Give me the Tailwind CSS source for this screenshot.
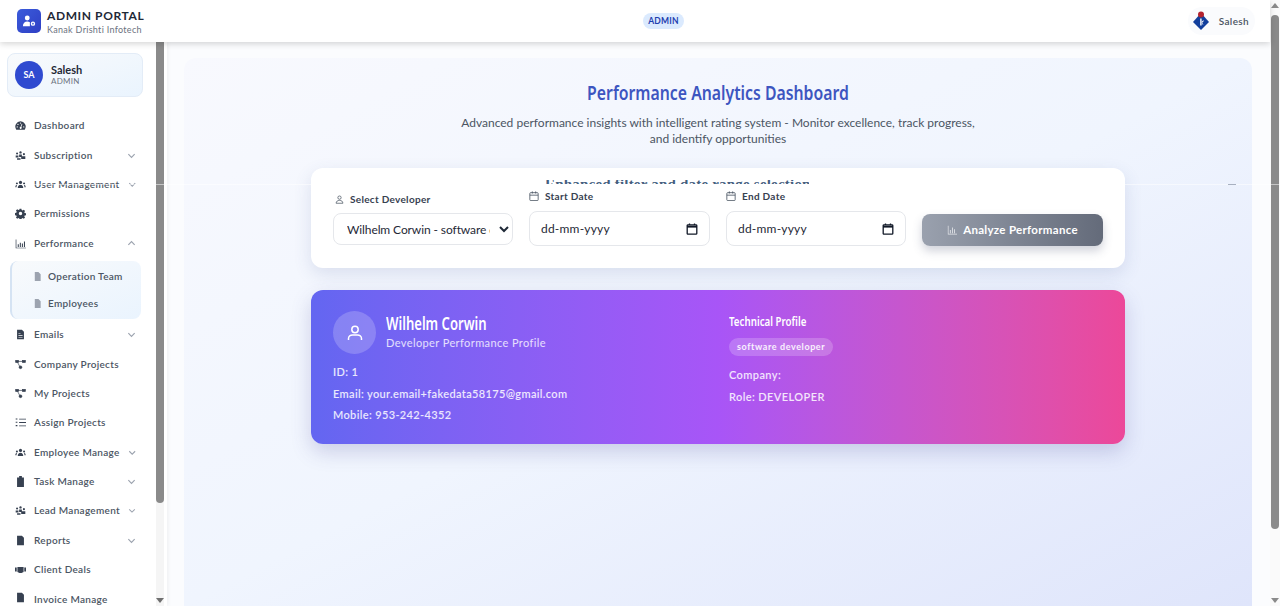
<!DOCTYPE html>
<html lang="en">
<head>
    <meta charset="UTF-8">
    <meta name="viewport" content="width=device-width, initial-scale=1.0">
    <title>Performance Analytics Dashboard</title>
    <script src="https://cdn.jsdelivr.net/npm/@tailwindcss/browser@4"></script>
</head>
<body class="h-[606px] overflow-hidden bg-white font-['Lato','Open_Sans',sans-serif] text-[#374151]">
    <div class="relative flex h-[606px]">
        <div class="flex-1 min-w-0">
            <!-- Header -->
            <header class="relative z-20 flex h-[42px] items-center justify-between bg-white pl-[17px] pr-[15px] shadow-[0_2px_6px_rgba(0,0,0,0.16)]">
                <div class="flex items-center gap-[6px]">
                    <div class="flex h-6 w-6 items-center justify-center rounded-[5px] bg-gradient-to-br from-[#3b5bdb] to-[#2f3fc4]">
                        <svg class="h-[14px] w-[14px]" viewBox="0 0 16 16" fill="#fff"><circle cx="6" cy="4.5" r="2.8"/><path d="M1 14c0-3.4 2.2-5.4 5-5.4 1.2 0 2.2.3 3 .9V14z"/><rect x="10" y="8.5" width="5" height="5" rx="2.5"/><circle cx="12.5" cy="11" r="1" fill="#3b5bdb"/></svg>
                    </div>
                    <div>
                        <div class="mt-[1px] text-[12px] leading-[15px] font-bold tracking-[0.6px] text-[#1f2937]">ADMIN PORTAL</div>
                        <div class="mt-[1px] text-[9px] leading-[11px] tracking-[0.3px] text-[#6b7280]">Kanak Drishti Infotech</div>
                    </div>
                </div>
                <div class="mr-[5px] rounded-full bg-[#dbeafe] px-[5px] py-[2px] text-[8.5px] leading-3 font-bold tracking-[0.2px] text-[#1e40af]">ADMIN</div>
                <div class="flex items-center gap-[9px] rounded-full bg-[#fafbfd] py-1 pr-[6px] pl-1">
                    <svg class="h-[20px] w-[18px]" viewBox="0 0 18 20"><path d="M9 2 17 11 9 19 1 11z" fill="#123f9c"/><circle cx="9" cy="3.5" r="3" fill="#b4232f"/><path d="M8.2 7.5h1.4v7H8.2z" fill="#fff"/><path d="M9.5 11l2-2v1.500l-1.400 1.200 1.400 1.800h-1z" fill="#fff"/></svg>
                    <span class="text-[10px] font-semibold tracking-[0.35px] text-[#4b5563]">Salesh</span>
                </div>
            </header>

            <div class="flex h-[564px]">
                <!-- Sidebar -->
                <aside class="relative w-[167px] shrink-0 overflow-hidden bg-white pr-[24px] pl-2 pt-[11px] shadow-[1px_0_4px_rgba(0,0,0,0.06)]">
                    <div class="-ml-[1px] flex h-[44px] w-[136px] items-center gap-2 rounded-lg border border-[#e3ecf7] bg-gradient-to-br from-[#f8fafc] to-[#eaf4fe] pl-[7px]">
                        <div class="flex h-[28px] w-[28px] items-center justify-center rounded-full bg-[#2f4ad0] text-[9px] font-bold text-white">SA</div>
                        <div class="-mt-[2px]">
                            <div class="text-[11px] leading-[13px] font-bold text-[#1f2937]">Salesh</div>
                            <div class="text-[8px] leading-[10px] tracking-[0.3px] text-[#6b7280]">ADMIN</div>
                        </div>
                    </div>

                    <nav class="mt-[14px] whitespace-nowrap text-[10px] font-semibold tracking-[0.3px] text-[#4b5563]">
                        <a class="flex h-[29.4px] items-center gap-[8px]"><svg class="ml-[7px] h-[11px] w-[11px] shrink-0" viewBox="0 0 16 16" fill="#374151"><path d="M8 2a7.5 7.5 0 0 0-6.500 11.300l.4.7h12.200l.4-.7A7.5 7.5 0 0 0 8 2z"/><g fill="#fff"><circle cx="8" cy="4.5" r=".9"/><circle cx="4.3" cy="6.5" r=".9"/><circle cx="3.2" cy="10" r=".9"/><circle cx="12.8" cy="10" r=".9"/><path d="M9.8 5.500l.9.4-1.500 4.300a1.500 1.500 0 1 1-1-.3z"/></g></svg>Dashboard</a>
                        <a class="flex h-[29.4px] items-center gap-[8px]"><svg class="ml-[7px] h-[11px] w-[11px] shrink-0" viewBox="0 0 16 16" fill="#374151"><circle cx="3" cy="5" r="1.5"/><circle cx="8" cy="3.5" r="1.7"/><circle cx="13" cy="6" r="1.5"/><path d="M1 8h4v3H1zM6 6.500h4V10H6zM9 9h6v4H9zM3 12h5v2H3z"/></svg>Subscription<svg class="mr-[7px] ml-auto h-[9px] w-[9px]" viewBox="0 0 10 10" fill="none" stroke="#9ca3af" stroke-width="1.3"><path d="M1.500 3.500 5 7l3.500-3.500"/></svg></a>
                        <a class="flex h-[29.4px] items-center gap-[8px]"><svg class="ml-[7px] h-[11px] w-[11px] shrink-0" viewBox="0 0 16 16" fill="#374151"><circle cx="8" cy="5" r="2.3"/><circle cx="2.8" cy="6.5" r="1.5"/><circle cx="13.2" cy="6.5" r="1.5"/><path d="M4 13c0-3 1.600-4.800 4-4.800s4 1.800 4 4.800zM0.500 12c0-2 .8-3.500 2.500-3.500-.5 1-.8 2.200-.8 3.500zM15.500 12c0-2-.8-3.500-2.500-3.500.5 1 .8 2.200.8 3.500z"/></svg>User Management<svg class="mr-[7px] ml-auto h-[9px] w-[9px]" viewBox="0 0 10 10" fill="none" stroke="#9ca3af" stroke-width="1.3"><path d="M1.500 3.500 5 7l3.500-3.500"/></svg></a>
                        <a class="flex h-[29.4px] items-center gap-[8px]"><svg class="ml-[7px] h-[11px] w-[11px] shrink-0" viewBox="0 0 16 16" fill="#374151"><path fill-rule="evenodd" d="M6.700 1h2.600l.4 2 1.400.6 1.700-1.100 1.800 1.800-1.100 1.700.6 1.400 2 .4v2.600l-2 .4-.6 1.400 1.100 1.700-1.800 1.800-1.700-1.100-1.400.6-.4 2H6.700l-.4-2-1.400-.6-1.700 1.100-1.800-1.800 1.100-1.700-.6-1.400-2-.4V7.200l2-.4.6-1.400L1.400 3.700l1.800-1.800 1.700 1.100 1.400-.6zM8 5.500a2.500 2.500 0 1 0 0 5 2.500 2.500 0 0 0 0-5z"/></svg>Permissions</a>
                        <a class="flex h-[29.4px] items-center gap-[8px]"><svg class="ml-[7px] h-[11px] w-[11px] shrink-0" viewBox="0 0 16 16" fill="#374151"><path d="M1 2h1v12h14v1H1zM4 9h1.500v4H4zM7 7h1.500v6H7zM10 8h1.500v5H10zM13 5h1.500v8H13z"/></svg>Performance<svg class="mr-[7px] ml-auto h-[9px] w-[9px]" viewBox="0 0 10 10" fill="none" stroke="#9ca3af" stroke-width="1.3"><path d="M1.500 6.500 5 3l3.500 3.500"/></svg></a>
                        <div class="mt-[3px] ml-[2px] flex h-[58px] w-[131px] flex-col rounded-lg border-l-2 border-[#d5e3f3] bg-gradient-to-br from-[#f8fafc] to-[#eaf4fe] pt-[2px]">
                            <a class="flex h-[27px] items-center gap-[6px] pl-[21px]"><svg class="h-[9px] w-[9px] shrink-0" viewBox="0 0 10 10" fill="#9ca3af"><path d="M2 0h4l2.500 2.500V10H2zM3 4.500h4.500v1H3zM3 6.500h4.500v1H3z"/></svg>Operation Team</a>
                            <a class="flex h-[27px] items-center gap-[6px] pl-[21px]"><svg class="h-[9px] w-[9px] shrink-0" viewBox="0 0 10 10" fill="#9ca3af"><path d="M2 0h4l2.500 2.500V10H2zM3 4.500h4.500v1H3zM3 6.500h4.500v1H3z"/></svg>Employees</a>
                        </div>
                        <a class="mt-[1px] flex h-[29.4px] items-center gap-[8px]"><svg class="ml-[7px] h-[11px] w-[11px] shrink-0" viewBox="0 0 16 16" fill="#374151"><path fill-rule="evenodd" d="M3 1h7l3 3v11H3zM5 6h3v1H5zM5 9h6v1H5zM5 11.500h6v1H5z"/></svg>Emails<svg class="mr-[7px] ml-auto h-[9px] w-[9px]" viewBox="0 0 10 10" fill="none" stroke="#9ca3af" stroke-width="1.3"><path d="M1.500 3.500 5 7l3.500-3.500"/></svg></a>
                        <a class="flex h-[29.4px] items-center gap-[8px]"><svg class="ml-[7px] h-[11px] w-[11px] shrink-0" viewBox="0 0 16 16" fill="none" stroke="#374151"><path d="M3 3.500h10M3 3.500 7.500 12"/><g fill="#374151"><rect x="1" y="2" width="4" height="3"/><rect x="11" y="2" width="4" height="3"/><circle cx="8" cy="12" r="2"/></g></svg>Company Projects</a>
                        <a class="flex h-[29.4px] items-center gap-[8px]"><svg class="ml-[7px] h-[11px] w-[11px] shrink-0" viewBox="0 0 16 16" fill="none" stroke="#374151"><path d="M3 3.500h10M3 3.500 7.500 12"/><g fill="#374151"><rect x="1" y="2" width="4" height="3"/><rect x="11" y="2" width="4" height="3"/><circle cx="8" cy="12" r="2"/></g></svg>My Projects</a>
                        <a class="flex h-[29.4px] items-center gap-[8px]"><svg class="ml-[7px] h-[11px] w-[11px] shrink-0" viewBox="0 0 16 16" fill="#374151"><path d="M6 2.500h10v1.300H6zM6 7.300h10v1.300H6zM6 12.200h10v1.300H6zM1 2h2.500v1.500H1zM1 6.800h2.500v1.500H1zM1 11.800h2.500v1.500H1z"/></svg>Assign Projects</a>
                        <a class="flex h-[29.4px] items-center gap-[8px]"><svg class="ml-[7px] h-[11px] w-[11px] shrink-0" viewBox="0 0 16 16" fill="#374151"><circle cx="8" cy="5" r="2.3"/><circle cx="2.8" cy="6.5" r="1.5"/><circle cx="13.2" cy="6.5" r="1.5"/><path d="M4 13c0-3 1.600-4.800 4-4.800s4 1.800 4 4.800zM0.500 12c0-2 .8-3.500 2.500-3.500-.5 1-.8 2.200-.8 3.500zM15.500 12c0-2-.8-3.500-2.500-3.500.5 1 .8 2.200.8 3.500z"/></svg>Employee Manage<svg class="mr-[7px] ml-auto h-[9px] w-[9px]" viewBox="0 0 10 10" fill="none" stroke="#9ca3af" stroke-width="1.3"><path d="M1.500 3.500 5 7l3.500-3.500"/></svg></a>
                        <a class="flex h-[29.4px] items-center gap-[8px]"><svg class="ml-[7px] h-[11px] w-[11px] shrink-0" viewBox="0 0 16 16" fill="#374151"><path d="M6 0h4v2h3v14H3V2h3z"/></svg>Task Manage<svg class="mr-[7px] ml-auto h-[9px] w-[9px]" viewBox="0 0 10 10" fill="none" stroke="#9ca3af" stroke-width="1.3"><path d="M1.500 3.500 5 7l3.500-3.500"/></svg></a>
                        <a class="flex h-[29.4px] items-center gap-[8px]"><svg class="ml-[7px] h-[11px] w-[11px] shrink-0" viewBox="0 0 16 16" fill="#374151"><circle cx="3" cy="5" r="1.5"/><circle cx="8" cy="3.5" r="1.7"/><circle cx="13" cy="6" r="1.5"/><path d="M1 8h4v3H1zM6 6.500h4V10H6zM9 9h6v4H9zM3 12h5v2H3z"/></svg>Lead Management<svg class="mr-[7px] ml-auto h-[9px] w-[9px]" viewBox="0 0 10 10" fill="none" stroke="#9ca3af" stroke-width="1.3"><path d="M1.500 3.500 5 7l3.500-3.500"/></svg></a>
                        <a class="flex h-[29.4px] items-center gap-[8px]"><svg class="ml-[7px] h-[11px] w-[11px] shrink-0" viewBox="0 0 16 16" fill="#374151"><path d="M3 1h7l3 3v11H3zM5 6h3v1H5zM5 9h6v1H5zM5 11.500h6v1H5z"/></svg>Reports<svg class="mr-[7px] ml-auto h-[9px] w-[9px]" viewBox="0 0 10 10" fill="none" stroke="#9ca3af" stroke-width="1.3"><path d="M1.500 3.500 5 7l3.500-3.500"/></svg></a>
                        <a class="flex h-[29.4px] items-center gap-[8px]"><svg class="ml-[7px] h-[11px] w-[11px] shrink-0" viewBox="0 0 16 16" fill="#374151"><path d="M0 5h2.500v6H0zM13.500 5H16v6h-2.500zM3.500 4.500h9v7l-3 1.500h-3l-3-1.500z"/></svg>Client Deals</a>
                        <a class="flex h-[26px] items-start gap-[8px] pt-[8px]"><svg class="ml-[7px] h-[11px] w-[11px] shrink-0" viewBox="0 0 16 16" fill="#374151"><path d="M3 1h7l3 3v11H3zM5 8h6v3H5z"/></svg>Invoice Manage</a>
                    </nav>

                    <!-- Sidebar scrollbar -->
                    <div class="absolute top-0 right-[3px] h-[564px] w-2 bg-[#f5f5f5]">
                        <div class="h-[461px] rounded-b-[4px] bg-[#8a8a8a]"></div>
                        <div class="absolute right-0 bottom-[3px] left-0 mx-auto h-0 w-0 border-x-4 border-t-[5px] border-x-transparent border-t-[#6f6f6f]"></div>
                    </div>
                </aside>

                <!-- Main -->
                <main class="min-w-0 flex-1 bg-[#fbfcfe] pt-4 pl-[17px] pr-[18px]">
                    <div class="h-[548px] rounded-t-xl bg-gradient-to-br from-[#f8f9fe] via-[#f0f5fe] to-[#dfe5fb] pt-6">
                        <h1 class="scale-x-[0.79] text-center font-['Noto_Sans',sans-serif] text-[20px] leading-[22px] font-semibold text-[#3d55c0]">Performance Analytics Dashboard</h1>
                        <p class="mx-auto mt-[11px] w-[520px] text-center text-[12px] leading-4 text-[#4b5563]">Advanced performance insights with intelligent rating system - Monitor excellence, track progress, and identify opportunities</p>

                        <!-- Filter card -->
                        <div class="mx-auto mt-[21px] flex h-[100px] w-[814px] items-start gap-4 rounded-xl bg-white pt-[23px] pr-[22px] pl-[22px] shadow-[0_6px_18px_rgba(60,80,140,0.14)]">
                            <div class="w-[180px] pt-[1px]">
                                <label class="flex items-center gap-[6px] pl-[2px] text-[10px] leading-[14px] font-bold tracking-[0.3px] text-[#374151]"><svg class="h-[9px] w-[9px]" viewBox="0 0 12 12" fill="none" stroke="#4b5563"><circle cx="6" cy="3.5" r="2.2"/><path d="M1.500 11c0-2.600 2-3.800 4.500-3.800s4.500 1.200 4.500 3.800z"/></svg>Select Developer</label>
                                <select class="mt-[7px] h-[32px] w-[180px] rounded-lg border border-[#e5e7eb] bg-white pr-[6px] pl-[9px] text-[12px] tracking-[-0.1px] text-[#1f2937]"><option>Wilhelm Corwin - software developer</option></select>
                            </div>
                            <div class="w-[181px]">
                                <label class="flex items-center gap-[6px] text-[10px] leading-[10px] font-bold tracking-[0.3px] text-[#374151]"><svg class="h-[10px] w-[10px]" viewBox="0 0 12 12" fill="none" stroke="#4b5563"><rect x="1" y="2" width="10" height="9.5" rx="1"/><path d="M1 5h10M4 .5V3M8 .5V3"/></svg>Start Date</label>
                                <div class="mt-[10px] flex h-[35px] items-center justify-between rounded-lg border border-[#e5e7eb] bg-white pr-[11px] pl-[11px]">
                                    <input type="text" value="dd-mm-yyyy" readonly class="w-[110px] text-[12px] tracking-[0.2px] text-[#1f2937] outline-none">
                                    <svg class="h-3 w-3" viewBox="0 0 12 12" fill="none" stroke="#111827" stroke-width="1.3"><rect x="1.2" y="1.8" width="9.6" height="9.4" rx=".8"/><path d="M1 3.600h10" stroke-width="2"/><path d="M3.500.5V2M8.500.5V2"/></svg>
                                </div>
                            </div>
                            <div class="w-[180px]">
                                <label class="flex items-center gap-[6px] text-[10px] leading-[10px] font-bold tracking-[0.3px] text-[#374151]"><svg class="h-[10px] w-[10px]" viewBox="0 0 12 12" fill="none" stroke="#4b5563"><rect x="1" y="2" width="10" height="9.5" rx="1"/><path d="M1 5h10M4 .5V3M8 .5V3"/></svg>End Date</label>
                                <div class="mt-[10px] flex h-[35px] items-center justify-between rounded-lg border border-[#e5e7eb] bg-white pr-[11px] pl-[11px]">
                                    <input type="text" value="dd-mm-yyyy" readonly class="w-[110px] text-[12px] tracking-[0.2px] text-[#1f2937] outline-none">
                                    <svg class="h-3 w-3" viewBox="0 0 12 12" fill="none" stroke="#111827" stroke-width="1.3"><rect x="1.2" y="1.8" width="9.6" height="9.4" rx=".8"/><path d="M1 3.600h10" stroke-width="2"/><path d="M3.500.5V2M8.500.5V2"/></svg>
                                </div>
                            </div>
                            <button class="mt-[23px] flex h-[32px] w-[181px] items-center justify-center gap-[6px] rounded-lg bg-gradient-to-r from-[#9aa1ae] to-[#646b7a] text-[11.5px] font-bold tracking-[0.3px] text-white shadow-[0_5px_10px_rgba(70,80,110,0.25)]"><svg class="h-[10px] w-[10px]" viewBox="0 0 12 12" fill="#e5e7eb"><path d="M1 1h.8v9.500H12v.8H1zM3.500 6h1v4h-1zM6 3h1v7H6zM8.500 5h1v5h-1z"/></svg>Analyze Performance</button>
                        </div>

                        <!-- Developer card -->
                        <div class="mx-auto mt-[22px] grid h-[154px] w-[814px] grid-cols-[396px_1fr] rounded-xl bg-gradient-to-r from-[#6366f1] via-[#a855f7] to-[#ec4899] pt-[21px] pl-[22px] text-white shadow-[0_8px_20px_rgba(70,70,150,0.22)]">
                            <div>
                                <div class="flex items-center gap-[10px]">
                                    <div class="flex h-[43px] w-[43px] items-center justify-center rounded-full bg-white/20">
                                        <svg class="h-[18px] w-[18px]" viewBox="0 0 18 18" fill="none" stroke="#fff" stroke-width="1.5"><circle cx="9" cy="5.5" r="3.2"/><path d="M2.500 16v-1.500c0-2.200 2-3.500 4-3.500h5c2 0 4 1.300 4 3.500V16"/></svg>
                                    </div>
                                    <div>
                                        <div class="origin-left scale-x-[0.77] font-['Noto_Sans',sans-serif] text-[17px] leading-[20px] font-semibold">Wilhelm Corwin</div>
                                        <div class="mt-[1px] text-[11px] leading-4 tracking-[0.4px] text-white/80">Developer Performance Profile</div>
                                    </div>
                                </div>
                                <div class="mt-[7px] text-[11px] leading-[21.5px] font-semibold tracking-[0.35px] text-white/85">
                                    <div>ID: 1</div>
                                    <div>Email: your.email+fakedata58175@gmail.com</div>
                                    <div>Mobile: 953-242-4352</div>
                                </div>
                            </div>
                            <div>
                                <div class="origin-left scale-x-[0.75] font-['Noto_Sans',sans-serif] text-[13px] leading-5 font-semibold">Technical Profile</div>
                                <span class="mt-[7px] inline-block rounded-full bg-white/20 px-2 py-[2px] text-[9px] leading-[14px] font-bold tracking-[0.6px] text-white/90">software developer</span>
                                <div class="mt-[8px] text-[11px] leading-[21.5px] font-semibold tracking-[0.4px] text-white/85">
                                    <div>Company:</div>
                                    <div>Role: DEVELOPER</div>
                                </div>
                            </div>
                        </div>
                    </div>
                </main>
            </div>
        </div>

        <!-- Page scrollbar -->
        <div class="relative w-[10px] shrink-0 bg-[#fafafa]">
            <div class="absolute top-[3px] left-[1px] h-0 w-0 border-x-4 border-b-[5px] border-x-transparent border-b-[#8a8a8a]"></div>
            <div class="mx-auto mt-[15px] h-[514px] w-2 rounded-[4px] bg-[#8a8a8a]"></div>
            <div class="absolute bottom-[3px] left-[1px] h-0 w-0 border-x-4 border-t-[5px] border-x-transparent border-t-[#8a8a8a]"></div>
        </div>

        <!-- Clipped heading strip lying over the card -->
        <div class="absolute top-[184px] left-0 h-[1px] w-full bg-white/50"></div>
        <div class="absolute top-[180px] left-[545px] h-[4px] w-[264px] overflow-hidden whitespace-nowrap text-center font-['Liberation_Serif',serif] text-[15px] leading-[9px] font-bold tracking-[0.2px] text-[#44607f]">Enhanced filter and date range selection</div>
        <div class="absolute top-[184px] left-[1228px] h-[1px] w-2 bg-[#a8b0c0]"></div>
    </div>
</body>
</html>
